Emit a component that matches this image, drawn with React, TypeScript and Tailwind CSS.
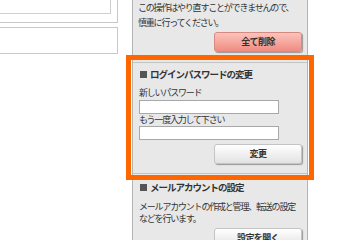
import React from 'react';

const jp = "[font-family:'Noto_Sans_CJK_JP',sans-serif]";
const body = 'text-[9px] text-[#333] tracking-[-1.2px] whitespace-nowrap';

const SectionTitle: React.FC<{ label: string }> = ({ label }) => (
  <div className="flex items-center h-[14px] text-[9.5px] leading-[14px] font-bold text-[#333] tracking-[-1px] whitespace-nowrap">
    <span className="inline-block w-[7px] h-[7px] bg-[#555] mr-[3px] ml-[1px]"></span>
    {label}
  </div>
);

const SideButton: React.FC<{ label: string; danger?: boolean }> = ({ label, danger }) => (
  <div className="flex justify-end pr-[5px]">
    <button
      className={
        danger
          ? 'w-[88px] h-[20px] rounded-[3px] border border-[#d98a80] bg-gradient-to-b from-[#fcc3bb] to-[#ef8c82] shadow-[1px_1px_1px_rgba(0,0,0,0.35)] text-[9px] font-bold text-[#333] tracking-[-0.6px]'
          : 'w-[88px] h-[20px] rounded-[3px] border border-[#c4c4c4] bg-gradient-to-b from-[#ffffff] to-[#e2e2e2] shadow-[1px_1px_1px_rgba(0,0,0,0.35)] text-[9px] font-bold text-[#333] tracking-[-0.6px]'
      }
    >
      {label}
    </button>
  </div>
);

const App: React.FC = () => {
  return (
    <div className={`w-[350px] h-[240px] overflow-hidden bg-white flex ${jp}`}>
      {/* left column, scrolled off the top */}
      <div className="w-[118px] shrink-0">
        <div className="h-[23px] border-r border-b border-[#c8c8c8]">
          <div className="w-[111px] h-[14px] border-r border-b border-[#cfcfcf] bg-white"></div>
        </div>
        <div className="mt-[4px] h-[27px] border-t border-r border-b border-[#c8c8c8]"></div>
      </div>

      {/* settings side panel */}
      <div className="ml-[14px] w-[176px] shrink-0 h-full bg-[#e8e8e8] border-l border-r border-[#b4b4b4]">
        <div className="pl-[5px] pb-[10px]">
          <p className={`${body} leading-[15px]`}>
            この操作はやり直すことができませんので、
            <br />
            慎重に行ってください。
          </p>
          <div className="mt-[2px]">
            <SideButton label="全て削除" danger />
          </div>
        </div>

        <div className="border-t border-[#c4c4c4] h-[111px] pl-[6px] pt-[4px] outline-[5px] outline-solid outline-[#ff6600] outline-offset-[2px]">
          <SectionTitle label="ログインパスワードの変更" />
          <div className={`mt-[6px] leading-[12px] ${body}`}>新しいパスワード</div>
          <input className="mt-[1px] block w-[140px] h-[14px] bg-white border border-[#a8a8a8] outline-none" />
          <div className={`leading-[12px] ${body}`}>もう一度入力して下さい</div>
          <input className="block w-[140px] h-[14px] bg-white border border-[#a8a8a8] outline-none" />
          <div className="mt-[4px] -ml-[6px]">
            <SideButton label="変更" />
          </div>
        </div>

        <div className="border-t border-[#c4c4c4] pl-[6px] pt-[6px]">
          <SectionTitle label="メールアカウントの設定" />
          <p className={`mt-[7px] leading-[12px] ${body}`}>
            メールアカウントの作成と管理、転送の設定
            <br />
            などを行います。
          </p>
          <div className="mt-[3px] -ml-[6px]">
            <SideButton label="設定を開く" />
          </div>
        </div>
      </div>
    </div>
  );
};

export default App;
